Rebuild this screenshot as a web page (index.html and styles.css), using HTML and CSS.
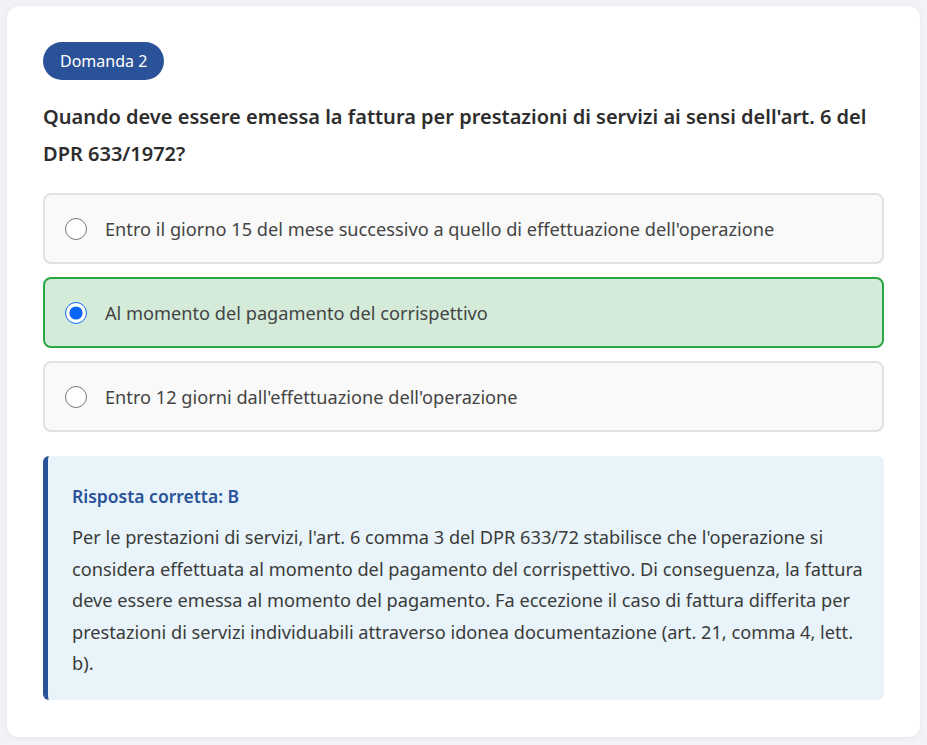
FILE: index.html
```html
<!DOCTYPE html>
<html lang="it">
<head>
  <meta charset="UTF-8" />
  <meta name="viewport" content="width=device-width, initial-scale=1.0"/>
  <title>Quiz IVA - Domanda 2</title>
  <link rel="stylesheet" href="styles.css">
</head>
<body>
  <div class="card">
    <span class="badge">Domanda 2</span>

    <h2 class="question">Quando deve essere emessa la fattura per prestazioni di servizi ai sensi dell'art. 6 del DPR 633/1972?</h2>

    <div class="options">
      <label class="option">
        <input type="radio" name="q2" value="A">
        <span>Entro il giorno 15 del mese successivo a quello di effettuazione dell'operazione</span>
      </label>
      <label class="option correct">
        <input type="radio" name="q2" value="B" checked>
        <span>Al momento del pagamento del corrispettivo</span>
      </label>
      <label class="option">
        <input type="radio" name="q2" value="C">
        <span>Entro 12 giorni dall'effettuazione dell'operazione</span>
      </label>
    </div>

    <div class="explanation">
      <h4>Risposta corretta: B</h4>
      <p>Per le prestazioni di servizi, l'art. 6 comma 3 del DPR 633/72 stabilisce che l'operazione si considera effettuata al momento del pagamento del corrispettivo. Di conseguenza, la fattura deve essere emessa al momento del pagamento. Fa eccezione il caso di fattura differita per prestazioni di servizi individuabili attraverso idonea documentazione (art. 21, comma 4, lett. b).</p>
    </div>
  </div>
</body>
</html>
```

FILE: styles.css
```css
body {
  margin: 0;
  padding: 6px 7px 9px 7px;
  background: #f1f3f7;
  font-family: "Noto Sans", "Open Sans", sans-serif;
  color: #333;
}
.card {
  background: #fff;
  border-radius: 12px;
  box-shadow: 0 1px 6px rgba(0, 0, 0, 0.06);
  padding: 36px 36px 37px 36px;
}
.badge {
  display: inline-block;
  background: #2a5298;
  color: #fff;
  font-size: 16px;
  line-height: 38px;
  padding: 0 17px;
  border-radius: 19px;
}
.question {
  font-size: 20px;
  font-weight: 600;
  line-height: 37px;
  color: #2d2d2d;
  margin: 18px 0 21px 0;
}
.options {
  display: flex;
  flex-direction: column;
  gap: 13px;
}
.option {
  display: flex;
  align-items: center;
  gap: 18px;
  min-height: 67px;
  padding: 0 20px;
  background: #f9f9f9;
  border: 2px solid #e1e1e1;
  border-radius: 8px;
  font-size: 18.2px;
  color: #444;
  cursor: pointer;
}
.option input {
  margin: 0;
  width: 22px;
  height: 22px;
  accent-color: #0b66f4;
}
.option.correct {
  background: #d4ebd9;
  border-color: #28a745;
}
.explanation {
  margin-top: 24px;
  background: #e8f4f9;
  border-left: 5px solid #2a5298;
  border-radius: 6px;
  padding: 28px 14px 20px 24px;
}
.explanation h4 {
  margin: 0 0 14px 0;
  font-size: 17.5px;
  font-weight: 600;
  color: #2a5298;
}
.explanation p {
  margin: 0;
  font-size: 18.2px;
  line-height: 31.5px;
  color: #3b3b3b;
}
```
